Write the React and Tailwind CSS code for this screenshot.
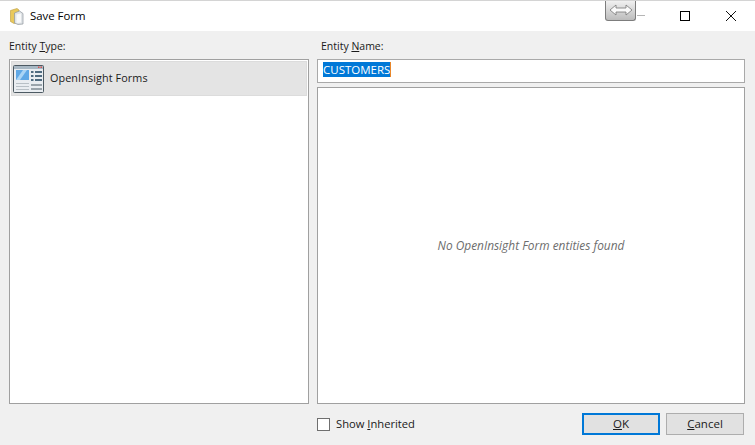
import { useState } from 'react'

function FolderIcon() {
  return (
    <svg width="14" height="17" viewBox="0 0 14 17" className="shrink-0">
      <path d="M0.5 2.5 L7 0.5 L9 2 L9 14 L4 15.5 L0.5 13.5 Z" fill="#e9c95c" stroke="#b8983a" strokeWidth="0.6" />
      <path d="M4.5 5 L9.5 3 L13 5.5 L13 16 L8 16.5 L4.5 15 Z" fill="#dfe3e6" stroke="#8f979e" strokeWidth="0.7" />
      <path d="M6.5 6.5 L11 5.5 L11 14.5 L6.5 15 Z" fill="#f8f9fa" />
    </svg>
  )
}

function FormIcon() {
  return (
    <svg width="31" height="28" viewBox="0 0 31 28" className="shrink-0">
      <rect x="0.5" y="0.5" width="30" height="27" rx="1" fill="#e9edf1" stroke="#4d5a63" />
      <rect x="1" y="1" width="29" height="3" fill="#a8b8c4" />
      <rect x="25" y="1.5" width="1.5" height="1.5" fill="#d9534f" />
      <rect x="27.5" y="1.5" width="1.5" height="1.5" fill="#d9534f" />
      <path d="M3 5 H16 V15 H3 Z" fill="#5fa8e6" />
      <path d="M3 15 L10 5 H14 L7 15 Z" fill="#a9d4f5" />
      <rect x="18" y="6" width="2.5" height="2" fill="#4f6b80" />
      <rect x="22" y="6" width="7" height="2" fill="#4f6b80" />
      <rect x="18" y="10" width="2.5" height="2" fill="#4f6b80" />
      <rect x="22" y="10" width="7" height="2" fill="#4f6b80" />
      <rect x="18" y="14" width="2.5" height="2" fill="#4f6b80" />
      <rect x="22" y="14" width="7" height="2" fill="#4f6b80" />
      <rect x="3" y="18" width="13" height="1" fill="#b8c0c6" />
      <rect x="3" y="21" width="13" height="1" fill="#b8c0c6" />
      <rect x="3" y="24" width="13" height="1" fill="#b8c0c6" />
      <rect x="18" y="19" width="11" height="2" fill="#9aa4ab" />
      <rect x="18" y="23" width="11" height="2" fill="#9aa4ab" />
    </svg>
  )
}

export default function App() {
  const [inherited, setInherited] = useState(false)

  return (
    <div className="relative w-[755px] h-[445px] overflow-hidden bg-[#f0f0f0] font-['Open_Sans','Noto_Sans',sans-serif] text-[11px] text-[#1a1a1a] border-t border-[#d4d4d4]">
      <div className="relative h-[30px] bg-white flex items-center pl-[10px]">
        <FolderIcon />
        <span className="ml-[6px] text-[11.4px] text-black">Save Form</span>
        <div className="absolute left-[605px] -top-px w-[31px] h-[21px] rounded-b-[3px] border border-t-0 border-[#7d7d7d] bg-gradient-to-b from-[#f4f4f4] to-[#bcbcbc] flex items-center justify-center">
          <svg width="24" height="12" viewBox="0 0 24 12">
            <path d="M1 6 L7 1 V4 H17 V1 L23 6 L17 11 V8 H7 V11 Z" fill="#fafafa" stroke="#777" strokeWidth="0.8" />
          </svg>
        </div>
        <div className="absolute left-[637px] top-[14px] w-[8px] h-px bg-[#b5b5b5]" />
        <div className="absolute left-[680px] top-[10px] w-[10px] h-[10px] border border-black" />
        <svg width="10" height="10" viewBox="0 0 10 10" className="absolute left-[726px] top-[10px]">
          <path d="M0 0 L10 10 M10 0 L0 10" stroke="#111" strokeWidth="1" />
        </svg>
      </div>

      <div className="flex gap-2 pl-[9px] pr-[10px] pt-[9px]">
        <div className="w-[300px] flex flex-col">
          <div className="h-[19px] leading-[13px] text-[10.5px]">
            Entity <span className="underline">T</span>ype:
          </div>
          <div className="h-[345px] bg-white border border-[#a0a0a0] p-px">
            <div className="h-[35px] bg-[#e4e4e4] border border-[#dcdcdc] flex items-center pl-px gap-[6px]">
              <FormIcon />
              <span className="text-[10.8px] tracking-[0.1px]">OpenInsight Forms</span>
            </div>
          </div>
        </div>

        <div className="w-[428px] flex flex-col">
          <div className="h-[19px] leading-[13px] pl-[4px] text-[10.5px]">
            Entity <span className="underline">N</span>ame:
          </div>
          <div className="h-[24px] bg-white border border-[#a9a9a9] flex items-center pl-[5px] pb-[3px]">
            <span className="bg-[#0078d7] text-white text-[11.5px] leading-[15px] border-r border-[#e8862a]">CUSTOMERS</span>
          </div>
          <div className="mt-[4px] h-[317px] bg-white border border-[#a0a0a0] flex items-center justify-center">
            <span className="italic text-[#6d6d6d] text-[11.9px]">No OpenInsight Form entities found</span>
          </div>
        </div>
      </div>

      <div className="flex items-center pl-[317px] pt-[9px]">
        <button
          onClick={() => setInherited(!inherited)}
          className={`w-[13px] h-[13px] border border-[#6f6f6f] ${inherited ? 'bg-[#0078d7]' : 'bg-white'}`}
        />
        <span className="ml-[6px] w-[79px] whitespace-nowrap text-[11.2px]">Show <span className="underline">I</span>nherited</span>
        <button className="ml-[167px] w-[78px] h-[22px] bg-[#e1e1e1] border-2 border-[#0078d7] text-[11.5px]">
          <span className="underline">O</span>K
        </button>
        <button className="ml-[6px] w-[78px] h-[22px] bg-[#e1e1e1] border border-[#adadad] text-[11.5px]">
          <span className="underline">C</span>ancel
        </button>
      </div>
    </div>
  )
}
